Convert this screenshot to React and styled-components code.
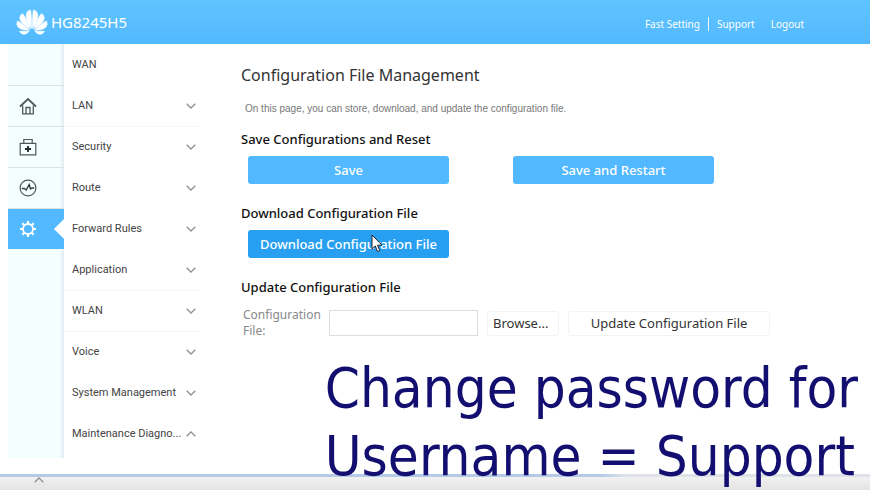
import styled, { createGlobalStyle } from 'styled-components';

const menuItems = [
  { name: 'WAN' },
  { name: 'LAN', arrow: 'down', line: true },
  { name: 'Security', arrow: 'down' },
  { name: 'Route', arrow: 'down' },
  { name: 'Forward Rules', arrow: 'down' },
  { name: 'Application', arrow: 'down', line: true },
  { name: 'WLAN', arrow: 'down', line: true },
  { name: 'Voice', arrow: 'down' },
  { name: 'System Management', arrow: 'down' },
  { name: 'Maintenance Diagno...', arrow: 'up' },
];

const Logo = () => (
  <svg width="32" height="26" viewBox="0 0 32 26" fill="#fff" stroke="#fff" strokeWidth="0.6" aria-hidden="true">
    <path d="M15.5 19.4C12 14.5 9.8 9.5 10.2 6 10.5 3 12.600 1.200 14.400 1c.8 2 1.200 8.700 1.100 18.400z" />
    <path d="M16.500 19.400C20 14.500 22.200 9.500 21.800 6 21.500 3 19.400 1.200 17.600 1c-.8 2-1.200 8.700-1.100 18.400z" />
    <path d="M14.3 20.2C12.2 14.4 9.6 8.6 6.5 4.6 4.2 6 3.300 8.400 4.100 10.800c1.100 3.200 5.200 6.600 10.200 9.400z" />
    <path d="M17.7 20.2c2.1-5.8 4.700-11.600 7.800-15.600 2.300 1.400 3.200 3.800 2.400 6.200-1.100 3.200-5.200 6.600-10.200 9.400z" />
    <path d="M13.400 21.200C10 18 5.700 14.300 1.500 11.900c-1.100 2.600-.7 5 1.100 6.700 2.200 2 5.600 2.600 10.800 2.600z" />
    <path d="M18.600 21.200c3.400-3.200 7.700-6.900 11.900-9.300 1.100 2.600.7 5-1.100 6.700-2.200 2-5.600 2.600-10.800 2.600z" />
    <path d="M13.2 22.300H3.500c1.200 2.200 3 3.200 5 2.900 1.900-.3 3.300-1.400 4.700-2.900z" />
    <path d="M18.800 22.300h9.700c-1.200 2.200-3 3.200-5 2.900-1.900-.3-3.300-1.400-4.700-2.900z" />
  </svg>
);

const HomeIcon = () => (
  <svg width="18" height="18" viewBox="0 0 18 18" fill="none" stroke="#50575b" strokeWidth="1.3" aria-hidden="true">
    <path d="M1 9.5 9 2l8 7.5" strokeWidth="1.8" />
    <path d="M3.7 8.5v8.3h10.6V8.5M7 16.5v-6h4v6" />
  </svg>
);

const KitIcon = () => (
  <svg width="18" height="18" viewBox="0 0 18 18" fill="none" stroke="#50575b" strokeWidth="1.2" aria-hidden="true">
    <path d="M1.2 5.3h15.6v11.5H1.2zM4.8 5V1.5h8.4V5" />
    <path d="M9 8v6M6 11h6" stroke="#22282b" strokeWidth="1.8" />
  </svg>
);

const PulseIcon = () => (
  <svg width="18" height="18" viewBox="0 0 18 18" fill="none" stroke="#50575b" strokeWidth="1.2" aria-hidden="true">
    <circle cx="9" cy="9" r="7.9" />
    <path d="M2.8 9.5h2.5L7.2 11l3-5.5 1.3 4.5 1.5-1h2.2" stroke="#343b3f" strokeWidth="1.4" />
  </svg>
);

const GearIcon = () => (
  <svg width="18" height="18" viewBox="0 0 18 18" fill="none" stroke="#fff" aria-hidden="true">
    <circle cx="9" cy="9" r="5" strokeWidth="1.8" />
    <path
      d="M9 4V1M9 17v-3M4 9H1M17 9h-3M5.5 5.5 3.3 3.3M14.7 14.7l-2.2-2.2M5.5 12.5l-2.2 2.2M14.7 3.3l-2.2 2.2"
      strokeWidth="2.2"
    />
  </svg>
);

const Chevron = ({ direction }) => (
  <ChevronSvg width="10" height="6" viewBox="0 0 10 6" aria-hidden="true">
    <path d={direction === 'up' ? 'M.7 5.3 5 1l4.3 4.3' : 'M.7.7 5 5 9.3.7'} />
  </ChevronSvg>
);

const railItems = [
  { name: 'Home', icon: <HomeIcon /> },
  { name: 'One-click diagnosis', icon: <KitIcon /> },
  { name: 'Status', icon: <PulseIcon /> },
  { name: 'Advanced', icon: <GearIcon />, active: true },
];

export default function App() {
  return (
    <Page>
      <GlobalStyle />
      <Header>
        <Logo />
        <Model>HG8245H5</Model>
        <TopLinks>
          <TopLink href="#fast">Fast Setting</TopLink>
          <Divider />
          <TopLink href="#support">Support</TopLink>
          <LogoutLink href="#logout">Logout</LogoutLink>
        </TopLinks>
      </Header>

      <Body>
        <Rail>
          <RailSpace />
          {railItems.map((item) => (
            <RailLink key={item.name} href="#rail" aria-label={item.name} $active={item.active}>
              {item.icon}
            </RailLink>
          ))}
        </Rail>
        <Menu>
          {menuItems.map((item) => (
            <MenuLink key={item.name} href="#menu" $line={item.line}>
              <MenuText>{item.name}</MenuText>
              {item.arrow && <Chevron direction={item.arrow} />}
            </MenuLink>
          ))}
        </Menu>

        <Main>
          <Title>Configuration File Management</Title>
          <Description>On this page, you can store, download, and update the configuration file.</Description>

          <Section>
            <SectionTitle>Save Configurations and Reset</SectionTitle>
            <ButtonRow>
              <Button type="button">Save</Button>
              <Button type="button">Save and Restart</Button>
            </ButtonRow>
          </Section>

          <Section>
            <SectionTitle>Download Configuration File</SectionTitle>
            <ButtonRow>
              <Button type="button" $hovered>
                Download Configuration File
                <Cursor width="12" height="19" viewBox="0 0 12 19" aria-hidden="true">
                  <path d="M1 1v14l3.3-3 2.2 5.5 2.3-1-2.3-5.3H11z" fill="#fff" stroke="#222" />
                </Cursor>
              </Button>
            </ButtonRow>
          </Section>

          <Section>
            <SectionTitle>Update Configuration File</SectionTitle>
            <FileRow>
              <FileLabel htmlFor="config-file">Configuration File:</FileLabel>
              <FileInput id="config-file" type="text" />
              <BrowseButton type="button">Browse...</BrowseButton>
              <PlainButton type="button">Update Configuration File</PlainButton>
            </FileRow>
          </Section>
        </Main>
      </Body>

      <BottomBar>
        <Chevron direction="up" />
      </BottomBar>

      <Caption>
        Change password for
        <br />
        Username = Support
      </Caption>
    </Page>
  );
}

const GlobalStyle = createGlobalStyle`
  * {
    box-sizing: border-box;
  }

  body {
    margin: 0;
    background-color: #fff;
    font-family: 'Noto Sans', 'Open Sans', sans-serif;
  }

  button, input {
    font-family: inherit;
  }

  a {
    text-decoration: none;
  }
`;

const Page = styled.div`
  position: relative;
  display: flex;
  flex-direction: column;
  min-height: 100vh;
`;

const Header = styled.header`
  display: flex;
  align-items: center;
  height: 44px;
  padding: 0 66px 0 16px;
  background: linear-gradient(#5fc5ff, #52b8ff);
`;

const Model = styled.span`
  margin-left: 3px;
  color: #fff;
  font-size: 15px;
  line-height: 20px;
`;

const TopLinks = styled.nav`
  display: flex;
  align-items: center;
  margin-left: auto;
  padding-top: 4px;
`;

const TopLink = styled.a`
  color: #fff;
  font-size: 10px;
  line-height: 16px;
`;

const LogoutLink = styled(TopLink)`
  margin-left: 16px;
`;

const Divider = styled.span`
  width: 1px;
  height: 14px;
  margin: 0 8px;
  background-color: #e6f6ff;
`;

const Body = styled.div`
  display: flex;
  padding-left: 8px;
  margin-bottom: 16px;
`;

const Rail = styled.nav`
  flex: none;
  width: 56px;
  padding-top: 1px;
  background: linear-gradient(to right, #f5feff 52px, #e6eff4 54px);
`;

const RailSpace = styled.div`
  height: 41px;
  border-bottom: 1px solid #d9e3e7;
`;

const RailLink = styled.a`
  position: relative;
  display: flex;
  align-items: center;
  height: 41px;
  padding-left: 11px;
  border-bottom: 1px solid ${({ $active }) => ($active ? '#f5feff' : '#d9e3e7')};
  background-color: ${({ $active }) => ($active ? '#52b8ff' : 'transparent')};

  &::after {
    content: '';
    display: ${({ $active }) => ($active ? 'block' : 'none')};
    position: absolute;
    right: 0;
    border: 10px solid transparent;
    border-left-width: 0;
    border-right-color: #fff;
  }
`;

const Menu = styled.nav`
  flex: none;
  width: 136px;
  padding: 1px 0 3px;
`;

const MenuLink = styled.a`
  display: flex;
  align-items: center;
  justify-content: space-between;
  height: 41px;
  padding: 0 4px 0 8px;
  border-bottom: 1px solid ${({ $line }) => ($line ? '#f6f6f6' : 'transparent')};
  color: #444;
`;

const MenuText = styled.span`
  font-family: Roboto, 'Noto Sans', sans-serif;
  font-size: 11px;
  line-height: 16px;
  white-space: nowrap;
`;

const ChevronSvg = styled.svg`
  flex: none;
  fill: none;
  stroke: #909090;
  stroke-width: 1.3;
`;

const Main = styled.main`
  flex: 1;
  padding: 20px 20px 0 41px;
`;

const Title = styled.h1`
  margin: 0;
  color: #333;
  font-size: 16px;
  font-weight: 400;
  line-height: 22px;
`;

const Description = styled.p`
  margin: 17px 0 0 4px;
  color: #777;
  font-family: 'Liberation Sans', Arial, sans-serif;
  font-size: 10px;
  line-height: 12px;
`;

const Section = styled.section`
  margin-bottom: 19px;

  ${Description} + & {
    margin-top: 14px;
  }
`;

const SectionTitle = styled.h2`
  margin: 0 0 7px;
  color: #111;
  font-size: 13px;
  font-weight: 500;
  line-height: 20px;
`;

const ButtonRow = styled.div`
  display: flex;
  gap: 64px;
  padding-left: 7px;
`;

const Button = styled.button`
  position: relative;
  width: 201px;
  height: 28px;
  padding: 0;
  border: 0;
  border-radius: 3px;
  background-color: ${({ $hovered }) => ($hovered ? '#289ff0' : '#52b8ff')};
  color: #fff;
  font-size: 13px;
  font-weight: 500;
`;

// mouse pointer over the hovered button
const Cursor = styled.svg`
  position: absolute;
  top: 4px;
  left: 123px;
`;

const FileRow = styled.div`
  display: flex;
  align-items: center;
  padding: 3px 0 0 2px;
`;

const FileLabel = styled.label`
  width: 86px;
  padding-right: 8px;
  color: #888;
  font-size: 12px;
  line-height: 16px;
`;

const FileInput = styled.input`
  width: 149px;
  height: 26px;
  border: 1px solid #ddd;
  background-color: #fff;
`;

const PlainButton = styled.button`
  width: 202px;
  height: 25px;
  margin-left: 9px;
  padding: 0;
  border: 1px solid #f3f3f3;
  border-radius: 3px;
  background-color: #fff;
  color: #333;
  font-size: 13px;
`;

const BrowseButton = styled(PlainButton)`
  width: 72px;
  padding-left: 5px;
  text-align: left;
`;

const BottomBar = styled.footer`
  flex: 1;
  min-height: 16px;
  padding-left: 34px;
  background: linear-gradient(#f4f4f4, #e4e4e4);
  line-height: 0;

  &::before {
    content: '';
    display: block;
    height: 3px;
    margin-left: -34px;
    background: linear-gradient(to right, #b3cbe9 69%, #dfe3e8 72%);
  }
`;

const Caption = styled.p`
  position: absolute;
  right: 12px;
  bottom: 0;
  margin: 0;
  color: #120f70;
  font-family: 'DejaVu Sans Condensed', Tahoma, 'DejaVu Sans', sans-serif;
  font-size: 56px;
  line-height: 68px;
  white-space: nowrap;
`;
